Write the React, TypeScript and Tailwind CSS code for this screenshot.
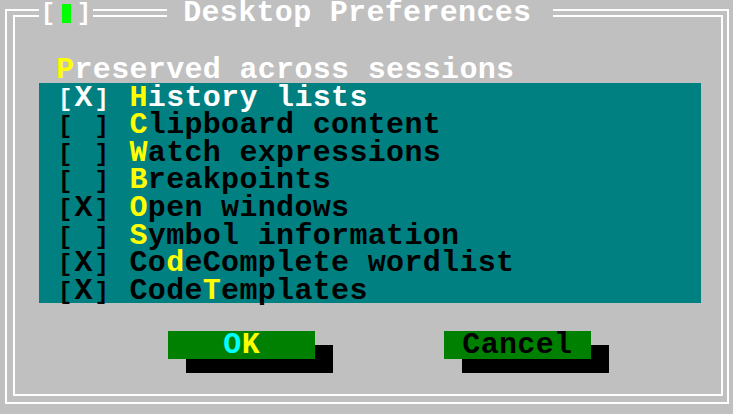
import React from "react";

type CellsProps = {
  text: string;
  hot?: number;
  color?: string;
};

// one glyph per 18.33px text-mode cell, like the VGA grid
const Cells = ({ text, hot = -1, color = "text-white" }: CellsProps) => (
  <span className={`inline-flex items-baseline ${color}`}>
    {text.split("").map((c, i) => (
      <span
        key={i}
        className={`w-[18.33px] text-center ${i === hot ? "text-[#ffff00]" : ""} ${
          c === "[" || c === "]" ? "text-[24px]" : ""
        }`}
      >
        {c === " " ? "\u00a0" : c}
      </span>
    ))}
  </span>
);

const items = [
  { text: "[X] History lists", hot: 4, active: true },
  { text: "[ ] Clipboard content", hot: 4 },
  { text: "[ ] Watch expressions", hot: 4 },
  { text: "[ ] Breakpoints", hot: 4 },
  { text: "[X] Open windows", hot: 4 },
  { text: "[ ] Symbol information", hot: 4 },
  { text: "[X] CodeComplete wordlist", hot: 6 },
  { text: "[X] CodeTemplates", hot: 8 },
];

const Button = ({ children }: { children: React.ReactNode }) => (
  <div className="relative w-[147px] h-[27.6px]">
    <div className="absolute left-[18px] top-[14px] w-[147px] h-[27.6px] bg-black" />
    <div className="relative w-[147px] h-[27.6px] bg-[#008000] pt-[1px] flex justify-center">
      {children}
    </div>
  </div>
);

export default function App() {
  return (
    <div className="relative w-[733px] h-[414px] overflow-hidden bg-[#c0c0c0] pt-[9px] pl-[5px] font-['Liberation_Mono',monospace] font-bold text-[30px] leading-[27.6px]">
      {/* double frame */}
      <div className="w-[724px] h-[395px] border-2 border-white pt-[4px] pl-[6px] pr-[4px] pb-[6px]">
        <div className="w-full h-full border-2 border-white flex flex-col">
          <div className="mt-[38px] ml-[41px] h-[27.6px] pt-[2px]">
            <Cells text="Preserved across sessions" hot={0} />
          </div>

          <div className="ml-[24px] w-[662px] h-[220.8px] bg-[#008080] pl-[17px] flex flex-col">
            {items.map((it) => (
              <div key={it.text} className="h-[27.6px] pt-[2px]">
                <Cells
                  text={it.text}
                  hot={it.hot}
                  color={it.active ? "text-white" : "text-black"}
                />
              </div>
            ))}
          </div>

          <div className="mt-[27.6px] ml-[153px] flex gap-[128.7px]">
            <Button>
              <span className="inline-flex">
                <span className="w-[18.33px] text-center text-[#00ffff]">O</span>
                <span className="w-[18.33px] text-center text-[#ffff00]">K</span>
              </span>
            </Button>
            <Button>
              <Cells text="Cancel" color="text-black" />
            </Button>
          </div>
        </div>
      </div>

      {/* title line, drawn over the top border */}
      <div className="absolute top-0 left-0 h-[27.6px] flex">
        <div className="ml-[39px] w-[54px] h-[27.6px] bg-[#c0c0c0] flex items-center text-white text-[24px]">
          <span className="w-[18px] text-center">[</span>
          <span className="w-[18px] flex justify-center">
            <span className="w-[9px] h-[19px] bg-[#00ff00]" />
          </span>
          <span className="w-[18px] text-center">]</span>
        </div>
        <div className="ml-[74px] w-[386px] h-[27.6px] bg-[#c0c0c0] pl-[16px]">
          <Cells text="Desktop Preferences" />
        </div>
      </div>
    </div>
  );
}
